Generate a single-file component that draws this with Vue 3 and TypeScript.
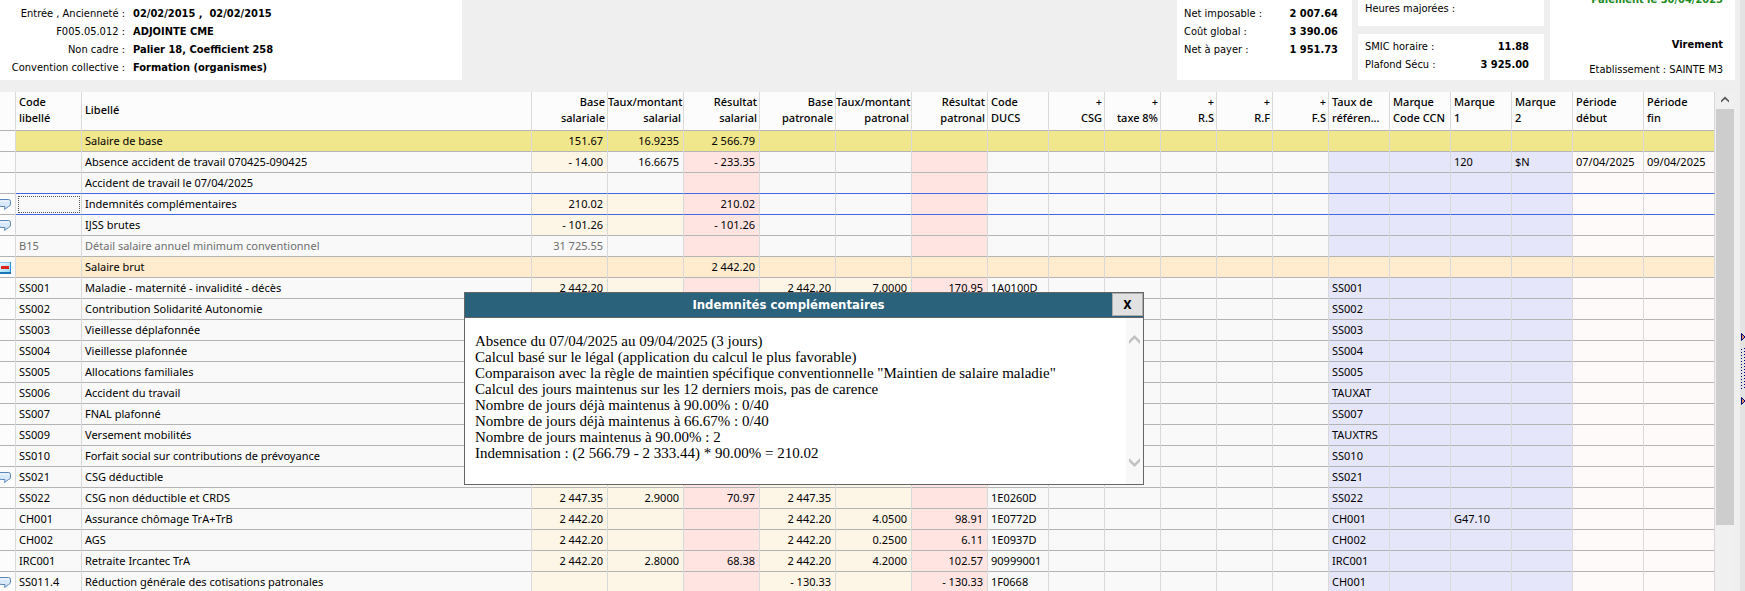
<script setup lang="ts">
import { ref } from 'vue'

interface Column {
  id: string
  lines: string[]
  kind?: 'num' | 'ref' | 'date' | 'label'
}

interface Row {
  kind?: 'base' | 'total' | 'muted' | 'selected' | 'before-selected'
  icon?: 'note' | 'collapse'
  cream?: string[]
  cells: Record<string, string>
}

const columns: Column[] = [
  { id: 'code', lines: ['Code', 'libellé'] },
  { id: 'label', lines: ['Libellé'], kind: 'label' },
  { id: 'baseS', lines: ['Base', 'salariale'], kind: 'num' },
  { id: 'rateS', lines: ['Taux/montant', 'salarial'], kind: 'num' },
  { id: 'resS', lines: ['Résultat', 'salarial'], kind: 'num' },
  { id: 'baseP', lines: ['Base', 'patronale'], kind: 'num' },
  { id: 'rateP', lines: ['Taux/montant', 'patronal'], kind: 'num' },
  { id: 'resP', lines: ['Résultat', 'patronal'], kind: 'num' },
  { id: 'ducs', lines: ['Code', 'DUCS'] },
  { id: 'csg', lines: ['+', 'CSG'], kind: 'num' },
  { id: 'taxe', lines: ['+', 'taxe 8%'], kind: 'num' },
  { id: 'rs', lines: ['+', 'R.S'], kind: 'num' },
  { id: 'rf', lines: ['+', 'R.F'], kind: 'num' },
  { id: 'fs', lines: ['+', 'F.S'], kind: 'num' },
  { id: 'ref', lines: ['Taux de', 'référen...'], kind: 'ref' },
  { id: 'ccn', lines: ['Marque', 'Code CCN'], kind: 'ref' },
  { id: 'm1', lines: ['Marque', '1'], kind: 'ref' },
  { id: 'm2', lines: ['Marque', '2'], kind: 'ref' },
  { id: 'start', lines: ['Période', 'début'], kind: 'date' },
  { id: 'end', lines: ['Période', 'fin'], kind: 'date' },
]

const employee = ['baseS', 'rateS']
const all = ['baseS', 'rateS', 'baseP', 'rateP']

const rows: Row[] = [
  { kind: 'base', cells: { label: 'Salaire de base', baseS: '151.67', rateS: '16.9235', resS: '2 566.79' } },
  {
    cream: ['baseS'],
    cells: {
      label: 'Absence accident de travail 070425-090425', baseS: '- 14.00', rateS: '16.6675', resS: '- 233.35',
      m1: '120', m2: '$N', start: '07/04/2025', end: '09/04/2025',
    },
  },
  { kind: 'before-selected', cells: { label: 'Accident de travail le 07/04/2025' } },
  { kind: 'selected', icon: 'note', cream: employee, cells: { label: 'Indemnités complémentaires', baseS: '210.02', resS: '210.02' } },
  { icon: 'note', cream: employee, cells: { label: 'IJSS brutes', baseS: '- 101.26', resS: '- 101.26' } },
  { kind: 'muted', cells: { code: 'B15', label: 'Détail salaire annuel minimum conventionnel', baseS: '31 725.55' } },
  { kind: 'total', icon: 'collapse', cells: { label: 'Salaire brut', resS: '2 442.20' } },
  { cream: all, cells: { code: 'SS001', label: 'Maladie - maternité - invalidité - décès', baseS: '2 442.20', baseP: '2 442.20', rateP: '7.0000', resP: '170.95', ducs: '1A0100D', ref: 'SS001' } },
  { cream: all, cells: { code: 'SS002', label: 'Contribution Solidarité Autonomie', ref: 'SS002' } },
  { cream: all, cells: { code: 'SS003', label: 'Vieillesse déplafonnée', ref: 'SS003' } },
  { cream: all, cells: { code: 'SS004', label: 'Vieillesse plafonnée', ref: 'SS004' } },
  { cream: all, cells: { code: 'SS005', label: 'Allocations familiales', ref: 'SS005' } },
  { cream: all, cells: { code: 'SS006', label: 'Accident du travail', ref: 'TAUXAT' } },
  { cream: all, cells: { code: 'SS007', label: 'FNAL plafonné', ref: 'SS007' } },
  { cream: all, cells: { code: 'SS009', label: 'Versement mobilités', ref: 'TAUXTRS' } },
  { cream: all, cells: { code: 'SS010', label: 'Forfait social sur contributions de prévoyance', ref: 'SS010' } },
  { icon: 'note', cream: all, cells: { code: 'SS021', label: 'CSG déductible', ref: 'SS021' } },
  { cream: all, cells: { code: 'SS022', label: 'CSG non déductible et CRDS', baseS: '2 447.35', rateS: '2.9000', resS: '70.97', baseP: '2 447.35', ducs: '1E0260D', ref: 'SS022' } },
  { cream: all, cells: { code: 'CH001', label: 'Assurance chômage TrA+TrB', baseS: '2 442.20', baseP: '2 442.20', rateP: '4.0500', resP: '98.91', ducs: '1E0772D', ref: 'CH001', m1: 'G47.10' } },
  { cream: all, cells: { code: 'CH002', label: 'AGS', baseS: '2 442.20', baseP: '2 442.20', rateP: '0.2500', resP: '6.11', ducs: '1E0937D', ref: 'CH002' } },
  { cream: all, cells: { code: 'IRC001', label: 'Retraite Ircantec TrA', baseS: '2 442.20', rateS: '2.8000', resS: '68.38', baseP: '2 442.20', rateP: '4.2000', resP: '102.57', ducs: '90999001', ref: 'IRC001' } },
  { icon: 'note', cream: all, cells: { code: 'SS011.4', label: 'Réduction générale des cotisations patronales', baseP: '- 130.33', resP: '- 130.33', ducs: '1F0668', ref: 'CH001' } },
]

const notes = [
  'Absence du 07/04/2025 au 09/04/2025 (3 jours)',
  'Calcul basé sur le légal (application du calcul le plus favorable)',
  'Comparaison avec la règle de maintien spécifique conventionnelle "Maintien de salaire maladie"',
  'Calcul des jours maintenus sur les 12 derniers mois, pas de carence',
  'Nombre de jours déjà maintenus à 90.00% : 0/40',
  'Nombre de jours déjà maintenus à 66.67% : 0/40',
  'Nombre de jours maintenus à 90.00% : 2',
  'Indemnisation : (2 566.79 - 2 333.44) * 90.00% = 210.02',
]

const identity = [
  ['Entrée , Ancienneté :', '02/02/2015 ,  02/02/2015'],
  ['F005.05.012 :', 'ADJOINTE CME'],
  ['Non cadre :', 'Palier 18, Coefficient 258'],
  ['Convention collective :', 'Formation (organismes)'],
]
const totals = [
  ['Net imposable :', '2 007.64'],
  ['Coût global :', '3 390.06'],
  ['Net à payer :', '1 951.73'],
]
const legal = [
  ['SMIC horaire :', '11.88'],
  ['Plafond Sécu :', '3 925.00'],
]

const noteOpen = ref(true)

function cellClass(row: Row, col: Column) {
  return [
    col.kind,
    { pink: col.id === 'resS' || col.id === 'resP', cream: row.cream?.includes(col.id) },
  ]
}
</script>

<template>
  <div class="app">
    <main class="main">
      <header class="top">
        <dl class="panel identity">
          <template v-for="[k, v] in identity" :key="k">
            <dt>{{ k }}</dt>
            <dd>{{ v }}</dd>
          </template>
        </dl>
        <dl class="panel totals">
          <div v-for="[k, v] in totals" :key="k" class="pair">
            <dt>{{ k }}</dt>
            <dd>{{ v }}</dd>
          </div>
        </dl>
        <div class="stack">
          <div class="panel hours">Heures majorées :</div>
          <dl class="panel legal">
            <div v-for="[k, v] in legal" :key="k" class="pair">
              <dt>{{ k }}</dt>
              <dd>{{ v }}</dd>
            </div>
          </dl>
        </div>
        <div class="panel payment">
          <p class="paid">Paiement le 30/04/2025</p>
          <p class="mode">Virement</p>
          <p>Etablissement : SAINTE M3</p>
        </div>
      </header>

      <section class="sheet">
        <table class="grid">
          <colgroup>
            <col class="w-icon" />
            <col v-for="c in columns" :key="c.id" :class="'w-' + c.id" />
          </colgroup>
          <thead>
            <tr>
              <th class="icon-cell"></th>
              <th v-for="c in columns" :key="c.id" :class="c.kind" scope="col">
                <span v-for="l in c.lines" :key="l" class="line">{{ l }}</span>
              </th>
            </tr>
          </thead>
          <tbody>
            <tr v-for="(r, i) in rows" :key="i" :class="r.kind">
              <td class="icon-cell">
                <button v-if="r.icon === 'note'" class="icon-button" type="button" aria-label="Note" @click="noteOpen = true">
                  <svg width="12" height="13" viewBox="0 0 12 13">
                    <path d="M-2 1.500H8.500Q10.500 1.500 10.500 3.500V6Q10.500 8 8.500 8.500L4.500 11.500L5 8.500H1L-1 7.500Z" fill="#d9e9fb" stroke="#5b86b8" />
                    <path d="M0 3H9" stroke="#f4f9ff" />
                  </svg>
                </button>
                <button v-else-if="r.icon === 'collapse'" class="icon-button" type="button" aria-label="Replier">
                  <svg width="12" height="13" viewBox="0 0 12 13">
                    <defs>
                      <linearGradient id="toggle-face" x1="0" y1="0" x2="1" y2="1">
                        <stop offset="0" stop-color="#ffffff" />
                        <stop offset="1" stop-color="#8fd6f8" />
                      </linearGradient>
                    </defs>
                    <rect x="-4" y="1" width="14.500" height="11" rx="1" fill="url(#toggle-face)" />
                    <path d="M0 1.500H10" stroke="#8ccbea" />
                    <path d="M10.500 1V12" stroke="#2793cf" />
                    <path d="M0 12H11" stroke="#1c76b4" stroke-width="2" />
                    <rect x="1" y="5" width="8" height="3" fill="#e02418" />
                  </svg>
                </button>
              </td>
              <td v-for="c in columns" :key="c.id" :class="cellClass(r, c)">{{ r.cells[c.id] }}</td>
            </tr>
          </tbody>
        </table>
        <div class="scrollbar">
          <button class="scroll-up" type="button" aria-label="Défiler vers le haut">
            <svg width="8" height="7" viewBox="0 0 8 7">
              <path d="M0 4.500L4 0.500L8 4.500V6.500L4 3L0 6.500Z" fill="#555" />
            </svg>
          </button>
          <div class="thumb"></div>
          <div class="track"></div>
        </div>
      </section>
    </main>

    <aside class="splitter">
      <svg width="5" height="72" viewBox="0 0 5 72">
        <path d="M1.500 0.500V7.500L5 4Z" fill="#f08a5d" stroke="#000080" />
        <path d="M1.500 16V57M4.500 15V56" stroke="#000080" stroke-dasharray="1 2" />
        <path d="M1.500 64.500V71.500L5 68Z" fill="#f08a5d" stroke="#000080" />
      </svg>
    </aside>

    <section v-if="noteOpen" class="popup" role="dialog" aria-labelledby="popup-title">
      <header class="popup-head">
        <h2 id="popup-title">Indemnités complémentaires</h2>
        <button class="close" type="button" @click="noteOpen = false">X</button>
      </header>
      <div class="popup-body">
        <div class="popup-text">
          <p v-for="n in notes" :key="n">{{ n }}</p>
        </div>
        <div class="popup-scroll">
          <svg width="11" height="9" viewBox="0 0 11 9">
            <path d="M0 5.500L5.500 0L11 5.500V9L5.500 3.500L0 9Z" fill="#c1c1c1" />
          </svg>
          <svg width="11" height="9" viewBox="0 0 11 9">
            <path d="M0 3.500L5.500 9L11 3.500V0L5.500 5.500L0 0Z" fill="#c1c1c1" />
          </svg>
        </div>
      </div>
    </section>
  </div>
</template>

<style>
body {
  margin: 0;
  overflow: hidden;
}
</style>

<style scoped>
.app {
  position: relative;
  display: flex;
  height: 100vh;
  overflow: hidden;
  background: #efefef;
  color: #000;
  font: 11px/18px "DejaVu Sans Condensed", "DejaVu Sans", sans-serif;
}
.main {
  flex: 1;
  min-width: 0;
  display: flex;
  flex-direction: column;
  gap: 12px;
  padding-right: 5px;
}
.top {
  display: flex;
  gap: 6px;
}
dl, dd, p, h2 {
  margin: 0;
}
dd {
  font-weight: bold;
  white-space: pre;
}
.panel {
  box-sizing: border-box;
  background: #fff;
  white-space: nowrap;
}
.identity {
  width: 462px;
  margin-right: auto;
  padding: 5px 0 3px;
  display: grid;
  grid-template-columns: 125px 1fr;
  column-gap: 8px;
}
.identity dt {
  text-align: right;
}
.pair {
  display: flex;
  justify-content: space-between;
}
.totals {
  width: 175px;
  padding: 5px 14px 3px 7px;
}
.stack {
  width: 186px;
  display: flex;
  flex-direction: column;
  gap: 8px;
}
.hours {
  flex: 1;
  padding: 0 7px 8px;
}
.legal {
  padding: 4px 15px 6px 7px;
}
.payment {
  width: 185px;
  padding: 0 12px 1px 0;
  text-align: right;
}
.paid {
  margin-top: -9px;
  color: #1e8a1e;
  font-weight: bold;
}
.mode {
  margin: 27px 0 7px;
  font-weight: bold;
}

.sheet {
  flex: 1;
  min-height: 0;
  display: flex;
  align-items: flex-start;
  overflow: hidden;
}
.grid {
  flex: 1;
  min-width: 0;
  table-layout: fixed;
  width: 100%;
  border-spacing: 0;
  font: 11px/16px "Noto Sans", "Open Sans", sans-serif;
}
.w-icon { width: 16px; }
.w-code { width: 66px; }
.w-baseS, .w-rateS, .w-resS, .w-baseP, .w-rateP, .w-resP { width: 76px; }
.w-ducs, .w-ref, .w-ccn, .w-m1, .w-m2 { width: 61px; }
.w-csg, .w-taxe, .w-rs, .w-rf, .w-fs { width: 56px; }
.w-start, .w-end { width: 71px; }

th, td {
  box-sizing: border-box;
  border-right: 1px solid #d9d9d9;
  box-shadow: inset 0 -1px #b4b4b4;
  white-space: nowrap;
  overflow: hidden;
}
th {
  height: 39px;
  padding: 2px 3px 5px;
  background: #fcfcfc;
  font-weight: 500;
  text-align: left;
  vertical-align: top;
}
th.num {
  padding-left: 0;
  padding-right: 2px;
  text-align: right;
}
th.label {
  vertical-align: middle;
}
.line {
  display: block;
}
td {
  height: 21px;
  padding: 0 3px 1px;
  background: #f9f9f9;
}
td.num {
  padding-right: 4px;
  text-align: right;
}
td.ref { background: #e6e6fa; }
td.date { background: #fffafa; }
td.cream { background: #fdf5e6; }
td.pink { background: #ffe4e1; }
.base td { background: #f0e68c; }
.total td { background: #ffebcd; }
.muted td { color: #6e6e6e; }
tr td.icon-cell {
  padding: 0;
  background: #fcfcfc;
}
.selected td:not(.icon-cell),
.before-selected td:not(.icon-cell) {
  border-bottom: 1px solid #4169e1;
  box-shadow: none;
  padding-bottom: 0;
}
.selected td:nth-child(2) {
  outline: 1px dotted #555;
  outline-offset: -3px;
}
button {
  margin: 0;
  padding: 0;
  border: 0;
  background: none;
  color: inherit;
  font: inherit;
}
.icon-button {
  display: block;
}
svg {
  display: block;
}

.scrollbar {
  align-self: stretch;
  width: 18px;
  margin: 0 1px;
  display: flex;
  flex-direction: column;
  background: #f0f0f0;
}
.scroll-up {
  height: 17px;
  padding: 1px 5px 4px;
}
.thumb {
  flex: 416;
  background: #cdcdcd;
}
.track {
  flex: 66;
}
.splitter {
  width: 5px;
  padding-top: 333px;
  background: #e3e3e3;
}

.popup {
  position: absolute;
  left: 464px;
  top: 292px;
  width: 680px;
  box-sizing: border-box;
  border: 1px solid #666;
  background: #fff;
}
.popup-head {
  display: flex;
  height: 24px;
  border-bottom: 1px solid #666;
  background: #2a617b;
}
.popup-head h2 {
  flex: 1;
  color: #fff;
  font-size: 13px;
  line-height: 23px;
  text-align: center;
}
.close {
  width: 31px;
  height: 23px;
  border: 1px solid #adadad;
  background: #e1e1e1;
  font-size: 12px;
  font-weight: bold;
}
.popup-body {
  display: flex;
}
.popup-text {
  flex: 1;
  padding: 15px 10px 23px;
  font: 15px/16px "Liberation Serif", "Times New Roman", serif;
  white-space: nowrap;
}
.popup-scroll {
  width: 17px;
  box-sizing: border-box;
  padding: 17px 3px;
  display: flex;
  flex-direction: column;
  justify-content: space-between;
  background: #f8f8f8;
}
</style>
